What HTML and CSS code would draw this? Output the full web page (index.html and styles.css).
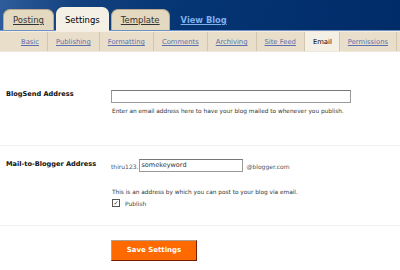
FILE: index.html
```html
<!DOCTYPE html>
<html lang="en">
<head>
    <meta charset="UTF-8">
    <title>Settings - Email</title>
    <link rel="stylesheet" href="styles.css">
</head>
<body>
    <div class="header">
        <div class="tabs">
            <a class="tab" href="#">Posting</a>
            <a class="tab active" href="#">Settings</a>
            <a class="tab" href="#">Template</a>
            <a class="view-blog" href="#">View Blog</a>
        </div>
    </div>

    <div class="subnav">
        <a class="sub" href="#">Basic</a>
        <a class="sub" href="#">Publishing</a>
        <a class="sub" href="#">Formatting</a>
        <a class="sub" href="#">Comments</a>
        <a class="sub" href="#">Archiving</a>
        <a class="sub" href="#">Site Feed</a>
        <span class="sub current">Email</span>
        <a class="sub" href="#">Permissions</a>
    </div>

    <div class="row first">
        <div class="label">BlogSend Address</div>
        <div class="field">
            <input class="text wide" type="text">
            <p class="hint">Enter an email address here to have your blog mailed to whenever you publish.</p>
        </div>
    </div>

    <div class="row second">
        <div class="label">Mail-to-Blogger Address</div>
        <div class="field">
            <div class="inline">
                <span class="small">thiru123.</span>
                <input class="text short" type="text" value="somekeyword">
                <span class="small">@blogger.com</span>
            </div>
            <p class="hint">This is an address by which you can post to your blog via email.</p>
            <label class="check"><span class="box">&#10003;</span> Publish</label>
        </div>
    </div>

    <div class="actions">
        <button class="save" type="button">Save Settings</button>
    </div>
</body>
</html>
```

FILE: styles.css
```css
body {
    margin: 0;
    font-family: "DejaVu Sans", Verdana, sans-serif;
    background-color: #fff;
    color: #333;
}
.header {
    height: 30px;
    background: linear-gradient(100deg, #2f5c9c 0%, #14427f 18%, #063574 45%, #002c68 100%);
    border-bottom: 1px solid #6f8fbf;
}
.tabs {
    display: flex;
    align-items: flex-end;
    height: 30px;
    padding-left: 3px;
    gap: 2px;
}
.tab {
    display: block;
    height: 20px;
    padding: 0 9px;
    line-height: 20px;
    font-family: "DejaVu Sans", sans-serif;
    font-size: 8.5px;
    color: #333;
    background-color: #e3d8c0;
    border: 1px solid #b9a98a;
    border-bottom: none;
    border-radius: 7px 7px 0 0;
}
.tab.active {
    height: 23px;
    line-height: 24px;
    padding: 0 8px;
    color: #000;
    text-decoration: none;
    background-color: #f5f0e6;
    border-color: #f5f0e6;
    margin-bottom: -1px;
}
.view-blog {
    margin-left: 9px;
    margin-bottom: 5px;
    font-size: 8.3px;
    font-weight: bold;
    color: #7fb0ee;
}
.subnav {
    display: flex;
    height: 19px;
    padding-left: 13px;
    background-color: #e8dec9;
    border-top: 1px solid #f3ede2;
    border-bottom: 1px solid #eee8dc;
}
.sub {
    display: block;
    padding: 0 8px;
    line-height: 20px;
    font-size: 6.8px;
    color: #5a6fb0;
    border-right: 1px solid #d2c6ad;
}
.sub.current {
    color: #000;
    background-color: #f5f0e6;
    padding: 0 7px 0 8px;
}
.row {
    display: flex;
    border-bottom: 1px solid #f2f2f2;
}
.row.first {
    height: 94px;
    padding-top: 38px;
    box-sizing: border-box;
}
.row.second {
    height: 80px;
    padding-top: 12px;
    box-sizing: border-box;
}
.label {
    width: 105px;
    padding-left: 6px;
    font-size: 6.6px;
    font-weight: bold;
    color: #111;
}
.row.second .label {
    padding-top: 2px;
}
.field {
    flex: 1;
}
.text {
    display: block;
    margin: 0;
    height: 13px;
    box-sizing: border-box;
    padding: 0 1px;
    font-family: "DejaVu Sans", sans-serif;
    font-size: 6.5px;
    color: #333;
    border: 1px solid #9a9a9a;
    border-top-color: #777;
}
.text.wide {
    width: 240px;
}
.text.short {
    width: 104px;
    margin: 0 3px 0 1px;
}
.hint {
    margin: 5px 0 0 1px;
    font-size: 5.8px;
    color: #333;
}
.inline {
    display: flex;
    align-items: center;
    height: 14px;
}
.small {
    font-size: 6px;
    color: #555;
    padding-top: 3px;
}
.row.second .hint {
    margin-top: 17px;
}
.check {
    display: flex;
    align-items: center;
    margin: 4px 0 0 1px;
    font-size: 6px;
    color: #444;
}
.box {
    display: inline-block;
    width: 6px;
    height: 6px;
    margin-right: 5px;
    border: 1px solid #555;
    font-size: 6px;
    line-height: 6px;
    text-align: center;
    color: #222;
}
.actions {
    padding: 11px 0 0 111px;
}
.save {
    width: 86px;
    height: 21px;
    padding: 0;
    font-family: "DejaVu Sans", sans-serif;
    font-size: 7px;
    font-weight: bold;
    color: #fff;
    background-color: #ff6a00;
    border: 1px solid;
    border-color: #b0a090 #7a1c00 #7a1c00 #b0a090;
}
```
